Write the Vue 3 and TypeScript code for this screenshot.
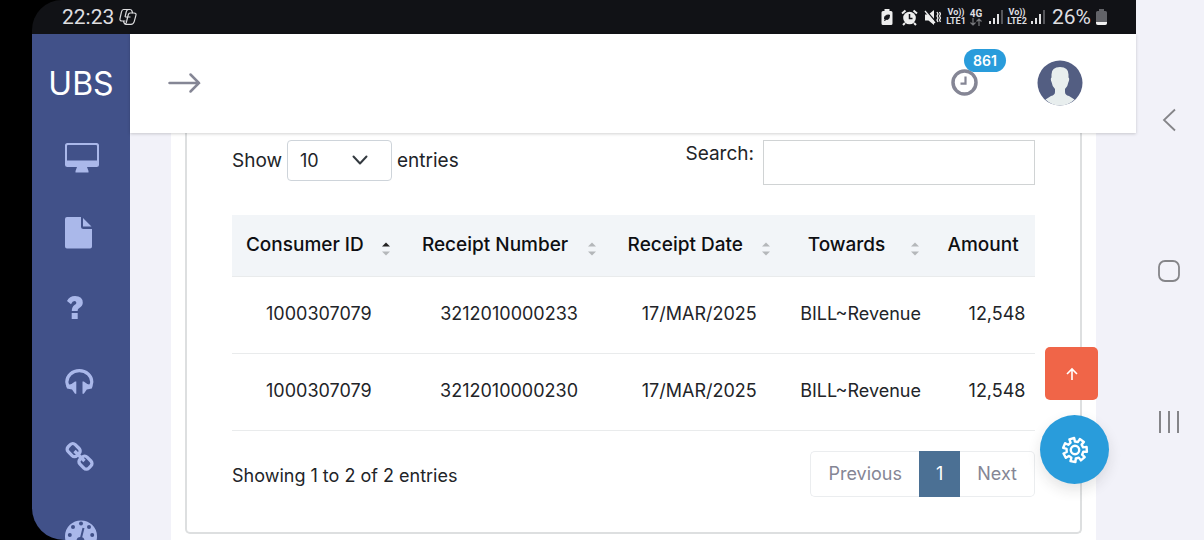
<script setup lang="ts">
import { ref } from 'vue'

interface Receipt {
  consumer: string
  receipt: string
  date: string
  towards: string
  amount: string
}

const columns = ['Consumer ID', 'Receipt Number', 'Receipt Date', 'Towards', 'Amount']
const receipts: Receipt[] = [
  { consumer: '1000307079', receipt: '3212010000233', date: '17/MAR/2025', towards: 'BILL~Revenue', amount: '12,548' },
  { consumer: '1000307079', receipt: '3212010000230', date: '17/MAR/2025', towards: 'BILL~Revenue', amount: '12,548' },
]
const pageSize = ref('10')
const search = ref('')

function gearPath(teeth: number, outer: number, inner: number): string {
  const step = 360 / teeth
  const points: string[] = []
  for (let i = 0; i < teeth; i++) {
    const corners: [number, number][] = [[-15, inner], [-12, outer], [12, outer], [15, inner]]
    for (const [offset, radius] of corners) {
      const angle = ((i * step - 3 + offset) * Math.PI) / 180
      points.push(`${(14 + radius * Math.cos(angle)).toFixed(1)} ${(14 + radius * Math.sin(angle)).toFixed(1)}`)
    }
  }
  return `M${points.join('L')}Z`
}
const gear = gearPath(7, 12, 8.5)
</script>

<template>
  <div class="device">
    <div class="screen">
      <div class="status">
        <span class="time">22:23</span>
        <svg class="copilot" width="18" height="18" viewBox="0 0 18 18" fill="none" stroke="#dcdcde" stroke-width="1.2" stroke-linejoin="round">
          <path d="M4.500 1.500H11q1.500 0 2 1.500l.5 2H15q2.600 0 1.900 2.400l-1.700 6.200q-.8 2.700-3.200 2.700H7q-1.500 0-2-1.500L4.500 13H3Q.4 13 1 10.500l1.400-6.400Q3 1.500 4.500 1.500Z" />
          <path d="M9 1.700Q7.600 2 7.200 4L6 9M13.500 5H11Q9.700 5 9.200 7L7.800 12.500Q7.300 16 6 16M4.500 13H6.500M6 9H11.500" />
        </svg>
        <span class="spacer"></span>
        <svg width="12" height="18" viewBox="0 0 12 18">
          <path d="M3.500 1h5v2H10q1.500 0 1.500 1.500v11Q11.500 17 10 17H2Q.5 17 .5 15.500v-11Q.5 3 2 3h1.500Z" fill="#eee" />
          <path d="M3.500 11c0-3 1-4 5-4 0 4-1.500 5-3.500 4.200L3.500 13" fill="#15161b" stroke="#15161b" />
        </svg>
        <svg class="alarm" width="17" height="17" viewBox="0 0 17 17">
          <circle cx="8.500" cy="9" r="6.300" fill="#eee" />
          <path d="M1 4.500 4.500 1.500M12.500 1.500 16 4.500M4 14l-2 2M13 14l2 2" stroke="#eee" stroke-width="2" />
          <path d="M8.500 5v4.500h3" fill="none" stroke="#15161b" stroke-width="1.500" />
        </svg>
        <svg class="mute" width="17" height="17" viewBox="0 0 17 17">
          <path d="M1 5.500h3.500L10 1v15L4.500 11.500H1Z" fill="#eee" />
          <path d="M2 1.500 12 13" stroke="#15161b" stroke-width="1.500" />
          <path d="m1 2 10 12M13 3l1 2-1 2 1 2-1 2 1 2M15.500 3l1 2-1 2 1 2-1 2 1 2" fill="none" stroke="#eee" stroke-width="1.300" />
        </svg>
        <span class="net"><span>Vo))</span><span>LTE1</span></span>
        <span class="net data"><span class="gen">4G</span>
          <svg width="12" height="8" viewBox="0 0 12 8" fill="none" stroke="#77787c" stroke-width="1.200"><path d="M3 0v7M.5 4.500 3 7l2.500-2.500M9 8V1M6.500 3.500 9 1l2.500 2.500" /></svg>
        </span>
        <svg class="signal" width="14" height="16" viewBox="0 0 14 16"><path d="M0 12h2v3H0zM4 9h2v6H4zM8 5h2v10H8z" fill="#e2e2e4" /><path d="M12 1h2v14h-2z" fill="#55565b" /></svg>
        <span class="net"><span>Vo))</span><span>LTE2</span></span>
        <svg class="signal" width="14" height="16" viewBox="0 0 14 16"><path d="M0 12h2v3H0zM4 9h2v6H4zM8 5h2v10H8z" fill="#e2e2e4" /><path d="M12 1h2v14h-2z" fill="#55565b" /></svg>
        <span class="percent">26%</span>
        <svg class="battery" width="11" height="16" viewBox="0 0 11 16"><path d="M3 0h5v2h1.500Q11 2 11 3.500V14q0 2-2 2H2q-2 0-2-2V3.500Q0 2 1.500 2H3Z" fill="#626368" /><path d="M0 13h11v1q0 2-2 2H2q-2 0-2-2Z" fill="#f2f2f2" /></svg>
      </div>

      <div class="body">
        <aside class="sidebar">
          <a class="brand" href="#">UBS</a>
          <nav class="menu" aria-label="Main menu">
            <a href="#" aria-label="Dashboard">
              <svg width="34" height="30" viewBox="0 0 34 30"><path fill-rule="evenodd" d="M2.500 0h29Q34 0 34 2.500v19q0 2.500-2.500 2.500H22l1.500 4v1.500h-13V28l1.500-4H2.500Q0 24 0 21.500v-19Q0 0 2.500 0ZM3 2q-1 0-1 1v14.500h30V3q0-1-1-1Z" /></svg>
            </a>
            <a href="#" aria-label="Documents">
              <svg width="28" height="32" viewBox="0 0 28 32"><path d="M2 0h14v9.500q0 2.500 2.500 2.500H27v17.500q0 2-2 2H2q-2 0-2-2V2Q0 0 2 0ZM18 1l8.500 8.500H18Z" /></svg>
            </a>
            <a href="#" aria-label="Help">
              <svg width="20" height="24" viewBox="0 0 20 24"><path d="M2 5Q4.500 0 10 0q7.800 0 7.800 6.800 0 3.400-3.800 5.400-1.400.8-1.400 2.800H6.800q0-4 2.700-5.900 1.900-1.200 1.900-2.100Q11.400 5 9.400 5 7.500 5 6 8.200ZM6.700 17h6v6h-6Z" /></svg>
            </a>
            <a href="#" aria-label="Support">
              <svg width="29" height="28" viewBox="0 0 29 28"><path d="M3.800 18Q1.800 15 1.800 13a12.400 11.200 0 0 1 25 0q0 2-2 5" fill="none" stroke="#aab8ea" stroke-width="3.200" /><path d="M11.300 12.500v12.300H10L7 20.500 2 19.500l-1-3L6.500 15 10 12.500ZM17.500 12.500v12.300h1.300l3-4.300 5-1 1-3L22.300 15l-3.500-2.500Z" /></svg>
            </a>
            <a href="#" aria-label="Links">
              <svg width="30" height="34" viewBox="0 0 30 34"><g fill="none" stroke="#aab8ea" stroke-width="3.300" stroke-linejoin="round"><rect x="2.700" y="4" width="12.500" height="10" rx="3.500" transform="rotate(45 8.700 8.700)" /><rect x="14.500" y="16.500" width="12.500" height="10" rx="3.500" transform="rotate(45 20.500 21.200)" /><path d="m9.500 10 10 10" /></g></svg>
            </a>
            <a href="#" aria-label="Performance">
              <svg width="32" height="28" viewBox="0 0 32 28"><path d="M4 28A16 16 0 1 1 28 28Z" /><g fill="#415189"><circle cx="16" cy="4.500" r="2" /><circle cx="8" cy="8" r="2" /><circle cx="24" cy="8" r="2" /><circle cx="4.800" cy="16" r="2" /><circle cx="27.200" cy="16" r="2" /><circle cx="15.500" cy="22" r="4" /></g><path d="m15.500 21 3-12" fill="none" stroke="#415189" stroke-width="2" /></svg>
            </a>
          </nav>
        </aside>

        <div class="main">
          <header class="topbar">
            <button class="plain" type="button" aria-label="Open menu">
              <svg width="33" height="22" viewBox="0 0 33 22" fill="none" stroke="#858695" stroke-width="2.500" stroke-linecap="round"><path d="M1.500 11H31M22.500 2.500 31 11l-8.500 8.500" /></svg>
            </button>
            <span class="spacer"></span>
            <button class="plain clock" type="button" aria-label="861 notifications">
              <svg width="27" height="27" viewBox="0 0 27 27" fill="none" stroke="#858695"><circle cx="13.500" cy="13.500" r="11.500" stroke-width="3.500" /><path d="M14.500 7.500v7.200H9.500" stroke-width="2.200" /></svg>
              <span class="badge">861</span>
            </button>
            <button class="plain avatar" type="button" aria-label="Profile">
              <svg width="46" height="46" viewBox="0 0 46 46"><circle cx="23" cy="23" r="22.500" fill="#535e82" /><path d="M23 7q8.500 0 8.500 7.500v3q1.500 1-.2 5-.5 4-3.300 6.500v3q0 3 4 4l5.500 3.500q-6 6-14.500 6t-14.500-6L14 36q4-1 4-4v-3q-2.800-2.500-3.300-6.500-1.700-4-.2-5v-3Q14.500 7 23 7Z" fill="#e8eeee" /></svg>
            </button>
          </header>

          <main class="content">
            <div class="card">
              <section class="panel">
                <div class="controls">
                  <label class="length">Show
                    <span class="select">
                      <select v-model="pageSize"><option>10</option><option>25</option><option>50</option></select>
                      <svg width="16" height="10" viewBox="0 0 16 10" fill="none" stroke="#343a40" stroke-width="2" stroke-linecap="round" stroke-linejoin="round"><path d="m1.500 1.500 6.500 7 6.500-7" /></svg>
                    </span>
                    entries
                  </label>
                  <label class="search">Search:<input v-model="search" type="search" /></label>
                </div>

                <div class="table-wrap">
                  <table>
                    <colgroup><col class="c1" /><col class="c2" /><col class="c3" /><col class="c4" /><col class="c5" /></colgroup>
                    <thead>
                      <tr>
                        <th v-for="(c, i) in columns" :key="c" scope="col">
                          {{ c }}
                          <svg width="8" height="14" viewBox="0 0 8 14" fill="#b4b7ba"><path d="m0 4.500 4-4 4 4Z" :class="{ active: i === 0 }" /><path d="m0 9.500 4 4 4-4Z" /></svg>
                        </th>
                      </tr>
                    </thead>
                    <tbody>
                      <tr v-for="r in receipts" :key="r.receipt">
                        <td>{{ r.consumer }}</td><td>{{ r.receipt }}</td><td>{{ r.date }}</td><td>{{ r.towards }}</td><td>{{ r.amount }}</td>
                      </tr>
                    </tbody>
                  </table>
                </div>

                <div class="footer">
                  <span class="summary">Showing 1 to 2 of 2 entries</span>
                  <nav class="pages" aria-label="Pages">
                    <button type="button">Previous</button><button type="button" class="current" aria-current="page">1</button><button type="button">Next</button>
                  </nav>
                </div>
              </section>
            </div>
          </main>
        </div>
      </div>

      <button class="to-top" type="button" aria-label="Back to top">
        <svg width="14" height="14" viewBox="0 0 14 14" fill="none" stroke="#fff" stroke-width="1.600"><path d="M7 13V2M2 7l5-5 5 5" /></svg>
      </button>
      <button class="settings" type="button" aria-label="Settings">
        <svg width="28" height="28" viewBox="0 0 28 28" fill="none" stroke="#fff" stroke-width="2.400" stroke-linejoin="round"><path :d="gear" /><circle cx="14" cy="14" r="4.200" /></svg>
      </button>
    </div>

    <nav class="system" aria-label="System navigation">
      <button class="plain" type="button" aria-label="Back"><svg width="22" height="24" viewBox="0 0 22 24" fill="none" stroke="#858589" stroke-width="1.800"><path d="M17 1.500 6 12l11 10.500" /></svg></button>
      <button class="plain" type="button" aria-label="Home"><svg width="22" height="24" viewBox="0 0 22 24" fill="none" stroke="#858589" stroke-width="1.800"><rect x="1" y="2" width="20" height="20" rx="6" /></svg></button>
      <button class="plain" type="button" aria-label="Recents"><svg width="22" height="24" viewBox="0 0 22 24" fill="none" stroke="#858589" stroke-width="2"><path d="M2 1v22M11 1v22M20 1v22" /></svg></button>
    </nav>
  </div>
</template>

<style>
body {
  background: #f2f2f9;
}
</style>

<style scoped>
* {
  box-sizing: border-box;
}
.device {
  display: flex;
  height: 100vh;
  overflow: hidden;
  background: #f2f2f9;
  font-family: Inter, "Open Sans", sans-serif;
  font-size: 18px;
  color: #222428;
}
svg {
  display: block;
  flex: none;
}
button,
input,
select {
  font: inherit;
  color: inherit;
}
.plain {
  border: 0;
  padding: 0;
  background: none;
}
.spacer {
  flex: 1;
}
.screen {
  position: relative;
  flex: 1;
  min-width: 0;
  display: flex;
  flex-direction: column;
  border-left: 32px solid #000;
  background: #000;
}
.status {
  height: 34px;
  flex: none;
  display: flex;
  align-items: center;
  padding: 0 29px 0 30px;
  background: #111216;
  border-top-left-radius: 30px;
  font-family: Roboto, sans-serif;
  font-size: 20px;
  color: #dedee0;
}
.time {
  font-size: 21px;
}
.copilot {
  margin-left: 5px;
}
.alarm {
  margin-left: 8px;
}
.mute {
  margin: 0 5px 0 6px;
}
.net {
  display: flex;
  flex-direction: column;
  align-items: center;
  width: 20px;
  font-size: 9px;
  font-weight: 700;
  line-height: 9px;
}
.data {
  margin-left: 1px;
  width: 18px;
}
.gen {
  font-size: 10px;
}
.signal {
  margin: 0 4px;
}
.percent {
  margin: 0 5px 0 3px;
  font-size: 21px;
}
.body {
  flex: 1;
  min-height: 0;
  display: flex;
}
.sidebar {
  width: 98px;
  flex: none;
  overflow: hidden;
  background: #415189;
  border-bottom-left-radius: 32px;
}
.brand {
  display: flex;
  align-items: center;
  justify-content: center;
  height: 86px;
  padding-top: 12px;
  color: #fff;
  font-size: 32px;
  text-decoration: none;
}
.menu a {
  display: flex;
  align-items: center;
  height: 75px;
  padding-left: 33px;
}
.menu svg {
  fill: #aab8ea;
}
.main {
  flex: 1;
  min-width: 0;
  display: flex;
  flex-direction: column;
  background: #f2f2f9;
}
.topbar {
  position: relative;
  height: 99px;
  flex: none;
  display: flex;
  align-items: center;
  padding: 0 53px 2px 38px;
  background: #fff;
  box-shadow: 0 1px 3px #0000002e;
}
.clock {
  position: relative;
  margin-right: 59px;
}
.badge {
  position: absolute;
  left: 13px;
  bottom: 24px;
  padding: 0 9px;
  border-radius: 12px;
  background: #299cdb;
  color: #fff;
  font-size: 14px;
  font-weight: 600;
  line-height: 23px;
}
.content {
  flex: 1;
  min-height: 0;
  overflow: hidden;
  padding: 0 40px 0 41px;
}
.card {
  padding: 0 14px 24px;
  background: #fff;
}
.panel {
  padding: 7px 45px 35px;
  border: 2px solid #dddfe0;
  border-top: 0;
  border-radius: 0 0 5px 5px;
}
.controls {
  display: flex;
  justify-content: space-between;
  align-items: flex-start;
  margin-bottom: 30px;
}
.length {
  display: flex;
  align-items: center;
  gap: 5px;
  font-size: 19px;
}
.select {
  position: relative;
  font-size: 18px;
}
.select select {
  display: block;
  appearance: none;
  width: 105px;
  height: 41px;
  padding: 0 12px;
  border: 1px solid #ced4da;
  border-radius: 4px;
  background: #fff;
}
.select svg {
  position: absolute;
  right: 24px;
  top: 15px;
  pointer-events: none;
}
.search {
  display: flex;
  gap: 9px;
  font-size: 19px;
  line-height: 27px;
}
.search input {
  width: 272px;
  height: 45px;
  border: 1px solid #d0d3d4;
  background: #fff;
}
.table-wrap {
  overflow: hidden;
}
table {
  width: 103%;
  table-layout: fixed;
  border-collapse: collapse;
  text-align: center;
}
.c1 {
  width: 21%;
}
.c2 {
  width: 25%;
}
.c3 {
  width: 21%;
}
.c4 {
  width: 18%;
}
.c5 {
  width: 15%;
}
th {
  position: relative;
  height: 61px;
  padding: 0 28px 2px 0;
  background: #f2f5f8;
  border-bottom: 1px solid #e9ebec;
  color: #0e0f12;
  font-size: 19px;
  font-weight: 500;
  white-space: nowrap;
}
th svg {
  position: absolute;
  right: 16px;
  top: 27px;
}
.active {
  fill: #222;
}
td {
  height: 77px;
  padding: 0 0 2px;
  border-bottom: 1px solid #e9ebec;
}
.footer {
  display: flex;
  justify-content: space-between;
  align-items: center;
  margin-top: 20px;
}
.summary {
  padding-top: 4px;
}
.pages {
  display: flex;
}
.pages button {
  height: 46px;
  padding: 0 17px;
  border: 1px solid #ebedef;
  background: #fff;
  color: #858695;
}
.pages button:first-child {
  border-right: 0;
  border-radius: 5px 0 0 5px;
}
.pages button:last-child {
  border-left: 0;
  border-radius: 0 5px 5px 0;
}
.pages .current {
  padding: 0 16px;
  border-color: #4b7094;
  background: #4b7094;
  color: #fff;
}
.to-top,
.settings {
  position: absolute;
  display: grid;
  place-items: center;
  padding: 0;
  border: 0;
}
.to-top {
  right: 38px;
  bottom: 140px;
  width: 53px;
  height: 53px;
  border-radius: 5px;
  background: #f06548;
}
.settings {
  right: 27px;
  bottom: 56px;
  width: 69px;
  height: 69px;
  border-radius: 50%;
  background: #299cdb;
  box-shadow: 0 6px 14px #1e20251f;
}
.system {
  width: 68px;
  flex: none;
  display: flex;
  flex-direction: column;
  align-items: center;
  justify-content: center;
  gap: 127px;
  padding: 2px 2px 0 0;
}
</style>
